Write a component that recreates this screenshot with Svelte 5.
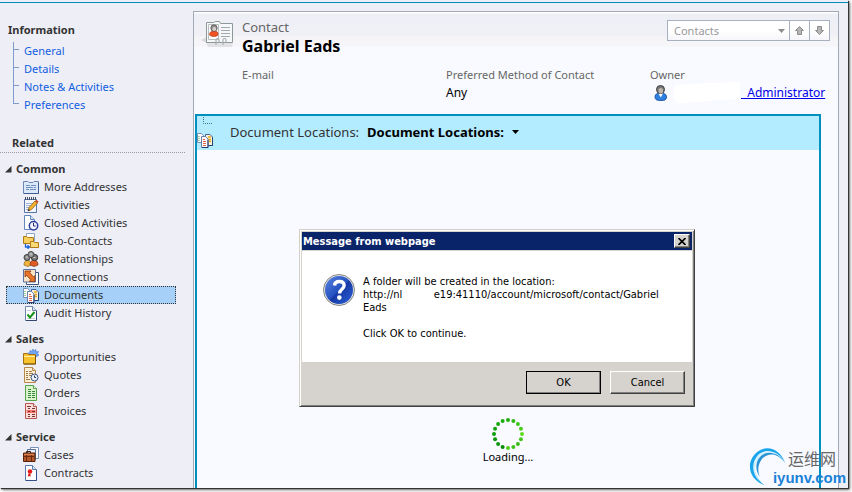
<script lang="ts">
  const sections = ['General', 'Details', 'Notes & Activities', 'Preferences'];

  const groups = [
    {
      title: 'Common',
      items: [
        { label: 'More Addresses', icon: 'address' },
        { label: 'Activities', icon: 'activity' },
        { label: 'Closed Activities', icon: 'closed' },
        { label: 'Sub-Contacts', icon: 'sub' },
        { label: 'Relationships', icon: 'people' },
        { label: 'Connections', icon: 'connect' },
        { label: 'Documents', icon: 'documents' },
        { label: 'Audit History', icon: 'audit' }
      ]
    },
    {
      title: 'Sales',
      items: [
        { label: 'Opportunities', icon: 'opportunity' },
        { label: 'Quotes', icon: 'quote' },
        { label: 'Orders', icon: 'order' },
        { label: 'Invoices', icon: 'invoice' }
      ]
    },
    {
      title: 'Service',
      items: [
        { label: 'Cases', icon: 'case' },
        { label: 'Contracts', icon: 'contract' }
      ]
    }
  ];

  const dotColors = [
    '#1fae0f', '#2fb814', '#3cc41a', '#49cc1c', '#62d820', '#45c41b', '#38bc16', '#3fc21a',
    '#52d01c', '#068a06', '#0b960a', '#0d980a', '#109c0a', '#14a20c', '#18a60c', '#1caa0e'
  ];
  const dots = dotColors.map((color, i) => {
    const angle = (i / 16) * Math.PI * 2;
    return { color, x: 16 + 14 * Math.sin(angle), y: 16 - 14 * Math.cos(angle) };
  });

  // the host name is partly blanked out, nbsp keeps it on one line
  const folderUrl = 'http://nl' + '\u00a0'.repeat(10) + 'e19:41110/account/microsoft/contact/Gabriel Eads';

  let selected = $state('Documents');
  let dialogOpen = $state(true);

  function closeDialog() {
    dialogOpen = false;
  }
</script>

{#snippet icon(name: string)}
  <svg class="icon" width="16" height="16" viewBox="0 0 16 16" aria-hidden="true">
    {#if name === 'address'}
      <path d="M.5 2.500h4.500l1 1h4l1-1h4.500v12H.5z" fill="#dbe8f8" stroke="#6a87b4" />
      <path d="M1 14.500h14.500v-11" fill="none" stroke="#3f5f94" />
      <path d="M3 6.500h4M8 6.500h5M3 8.500h7M11 8.500h2M3 10.500h3M7 10.500h6" stroke="#6d8dc0" />
    {:else if name === 'activity'}
      <path d="M1.500 2.500h12v13h-12z" fill="#f3f7fd" stroke="#5576a8" />
      <path d="M2 1.500h12" stroke="#444f66" stroke-width="3" stroke-dasharray="1 1" />
      <path d="M3 6.500h7M3 8.500h6M3 10.500h4M3 12.500h3" stroke="#9cb4d8" />
      <path d="M6 10.500 12 4l2.500 2-6 6.500-3.500 1.500z" fill="#f4b429" stroke="#8d5a1d" stroke-width=".8" />
      <path d="m12 4 2.500 2 1-1.500-2-1.500z" fill="#d33b1c" />
      <path d="m5 14 .7-2 1.300 1.200z" fill="#222" />
    {:else if name === 'closed'}
      <path d="M1.500.5h6l4 4v10h-10z" fill="#fff" stroke="#5f86bd" />
      <path d="M7.500.5v4h4" fill="#d7e4f6" stroke="#5f86bd" />
      <circle cx="10.500" cy="10.800" r="4.200" fill="#f4f6ff" stroke="#2b3fa0" stroke-width="1.500" />
      <path d="M10.500 8v3h2.200" fill="none" stroke="#26306b" />
    {:else if name === 'sub'}
      <path d="M3.500.5h8v8h-8z" fill="#fff" stroke="#8ea4c8" />
      <path d="M.5 3.500h3l1 1h6v6H.5z" fill="#f9cf5e" stroke="#b07a18" />
      <path d="M7.500 8.500h3l1 1h4v5h-8z" fill="#fbd974" stroke="#b07a18" />
      <path d="M2.500 11v3H6M4.500 12.200 6.500 14l-2 1.800" fill="none" stroke="#1763e0" stroke-width="1.300" />
    {:else if name === 'people'}
      <path d="M1 14c0-3 1-4.500 3.500-4.500S8 11 8 14l-3 1.500z" fill="#f2b63a" stroke="#8c611d" stroke-width=".7" />
      <path d="M7 14c0-3 1.500-5 4-5s4 2 4 5l-4 1.500z" fill="#df5a24" stroke="#7f2b13" stroke-width=".7" />
      <circle cx="4" cy="6.500" r="3" fill="#8b8b8b" stroke="#3c3c3c" />
      <circle cx="11.500" cy="6.500" r="3.200" fill="#777" stroke="#333" />
      <circle cx="8" cy="3.500" r="3" fill="#9a9a9a" stroke="#444" />
      <path d="M3 6h2M10.500 6.500h2M7 3h2" stroke="#d7d7d7" />
    {:else if name === 'connect'}
      <path d="M3.500 3.500h12v12h-12z" fill="#fff" stroke="#3e567f" />
      <path d="M.5.5h12v12.500H.5z" fill="#fbe3c3" stroke="#5873a1" />
      <path d="M2 2h6L6.700 3.700l4 4.500L12 6.500v6H6.200l1.500-1.700-4-4.500L2 8z" fill="#ea7427" stroke="#8a3710" stroke-width=".8" />
    {:else if name === 'documents'}
      <path d="M.5 1.500h4l2 2v7h-6z" fill="#fff" stroke="#7a8fb8" />
      <path d="M1.500 4.500h2M1.500 6.500h2M1.500 8.500h2" stroke="#3fa33f" stroke-dasharray="1 1" />
      <path d="M8.500 2.500h4.500l2.500 2.500v8.500h-7z" fill="#fff3d6" stroke="#40609c" />
      <path d="M11 5h3M11 7.500h3M12 9.500h2" stroke="#e6a81f" stroke-width="1.400" />
      <path d="M15.500 6v7.500H12" fill="none" stroke="#24407c" />
      <path d="M4.500 4.500h4l2.500 2.500v8.500h-6.500z" fill="#fff" stroke="#6b7ea8" />
      <path d="M5 15.500h6V8" fill="none" stroke="#24356b" />
      <path d="M6 7.500h2M6 9.500h3M6 11.500h3M6 13.500h3" stroke="#e0604a" />
    {:else if name === 'audit'}
      <path d="M2.500 1.500h7l4 4v10h-11z" fill="#fff" stroke="#6d83a8" />
      <path d="M3 15.500h10.500V5.500" fill="none" stroke="#33476f" />
      <path d="M9.500 1.500v4h4" fill="#d9e3f3" stroke="#6d83a8" />
      <path d="M4 5.500h4M4 13.500h8" stroke="#c3cddf" />
      <path d="m4.500 9.500 2.500 3 4.500-5.500" fill="none" stroke="#169019" stroke-width="2" />
    {:else if name === 'opportunity'}
      <path d="m10 0 1 2 2-1.500V3l2.500-.5L14.500 5l1.500 1-2 1.500H5L4.500 4l2 .3L7 1.500l2 1z" fill="#74a5ef" stroke="#4379cf" stroke-width=".6" />
      <path d="M.5 4.500h4l1 1h7v9.500H.5z" fill="#f7c22d" stroke="#a4700d" />
      <path d="M1 7.500h11" stroke="#fff0a6" />
      <path d="M12.500 6v9H1" fill="none" stroke="#7d5204" />
    {:else if name === 'quote'}
      <path d="M1.500.5h8l3 3v12h-11z" fill="#fdeed6" stroke="#b98849" />
      <path d="M9.500.5v3h3" fill="#f6d8a9" stroke="#b98849" />
      <path d="M3 4.500h2M6 4.500h3M3 6.500h2M6 6.500h4M3 8.500h2M6 8.500h2M3 10.500h2M3 12.500h4" stroke="#a07b4a" />
      <circle cx="11.500" cy="10.500" r="3.500" fill="#e8f0fb" stroke="#3c5480" />
      <path d="M11.500 8.500v2H13" fill="none" stroke="#263a63" />
    {:else if name === 'order'}
      <path d="M2.500.5h8l3 3v12h-11z" fill="#d9f3cd" stroke="#57a14a" />
      <path d="M10.500.5v3h3" fill="#f2fbef" stroke="#57a14a" />
      <path d="M5 4.500h3M5 6.500h3M9 6.500h3M5 8.500h3M9 8.500h3M5 10.500h3M9 10.500h3M5 12.500h3M9 12.500h3" stroke="#39873a" />
    {:else if name === 'invoice'}
      <path d="M2.500.5h8l3 3v12h-11z" fill="#fbdcd9" stroke="#b85650" />
      <path d="M10.500.5v3h3" fill="#fff3f2" stroke="#b85650" />
      <path d="M4 3.500h4M5 5.500h2M9 5.500h3M5 11.500h2M9 11.500h3M5 13.500h2M9 13.500h3" stroke="#7c3531" />
      <path d="M3.500 7h9v3h-9z" fill="#f0746a" />
      <path d="M5 8.500h2M9 8.500h3" stroke="#8f2823" />
    {:else if name === 'case'}
      <path d="M7.500.5h8v11h-8z" fill="#fff" stroke="#7b93bb" />
      <path d="M4.500 2.500h8v10h-8z" fill="#e9f0fb" stroke="#54719f" />
      <path d="M3.500 6V4.500h4V6" fill="none" stroke="#3b1c0d" />
      <path d="M.5 6h11.500v8.500H.5z" fill="#b4592b" stroke="#572208" />
      <path d="M1 9.500h10.500M3.500 7v7M8.500 7v7" stroke="#6b2c10" />
      <path d="M1 7.500h10" stroke="#d98757" />
    {:else if name === 'contract'}
      <path d="M2.500.5h7l4 4v11h-11z" fill="#fff" stroke="#5878ad" />
      <path d="M9.500.5v4h4" fill="#d9e5f6" stroke="#5878ad" />
      <path d="M3 15.500h10.500v-10" fill="none" stroke="#33508a" />
      <path d="m5.500 8.500-.8 3 1.800-.6 1.200.8-.3-3z" fill="#d31818" />
      <circle cx="7" cy="6.500" r="2.300" fill="#e81d1d" />
    {/if}
  </svg>
{/snippet}

<div class="desktop">
  <div class="window">
    <nav class="sidebar">
      <h2>Information</h2>
      <ul class="tree">
        {#each sections as section}
          <li><a href="#top">{section}</a></li>
        {/each}
      </ul>

      <h2 class="related">Related</h2>
      {#each groups as group}
        <section class="group">
          <h3>
            <svg width="7" height="7" viewBox="0 0 7 7" aria-hidden="true"><path d="M6.500 0v6.500H0z" fill="#333" /></svg>
            {group.title}
          </h3>
          {#each group.items as item}
            <button
              type="button"
              class="nav-item"
              class:selected={selected === item.label}
              onclick={() => (selected = item.label)}
            >
              {@render icon(item.icon)}
              <span>{item.label}</span>
            </button>
          {/each}
        </section>
      {/each}
    </nav>

    <main class="record">
      <header class="record-head">
        <svg class="card" width="32" height="30" viewBox="0 0 32 30" aria-hidden="true">
          <path d="m0 20 6-3v6z" fill="#d8d8de" />
          <path d="M5 23h27l-1 4H7z" fill="#e2e2e6" />
          <path d="M5.500 2.500h7l2-1h4l1 2h12v19h-26z" fill="#f6f7f8" stroke="#8f9898" />
          <path d="M7.500 4.500h10v15h-10z" fill="#fff" stroke="#b7bdbd" />
          <path d="M20 7.500h9M20 10.500h9M20 13.500h9M20 16.500h9" stroke="#a3a8b0" />
          <path d="M8.500 15c0-3 1.500-4 4.500-4s4 1 4 4c-2 2-6 2-8.500 0z" fill="#ef5223" stroke="#b0340f" stroke-width=".6" />
          <circle cx="13" cy="8" r="3.200" fill="#8d8d8d" stroke="#555" stroke-width=".8" />
          <circle cx="13.300" cy="9" r="1.900" fill="#d8d0ca" />
          <path d="M15 25v-5c0-2 3-2 3 0v3M22 25v-5c0-2 3-2 3 0v3" fill="none" stroke="#a9afb3" stroke-width="1.200" />
        </svg>

        <div class="title">
          <p>Contact</p>
          <h1>Gabriel Eads</h1>
        </div>

        <div class="switcher">
          <label class="lookup">
            <select aria-label="Record set">
              <option>Contacts</option>
            </select>
            <svg width="7" height="4" viewBox="0 0 7 4" aria-hidden="true"><path d="M0 0h7L3.500 4z" fill="#8c8c8c" /></svg>
          </label>
          <button type="button" aria-label="Previous record">
            <svg width="9" height="9" viewBox="0 0 9 9"><path d="m4.500.5 4 4h-2v4h-4v-4h-2z" fill="#b5b5b5" stroke="#8c8c8c" /></svg>
          </button>
          <button type="button" aria-label="Next record">
            <svg width="9" height="9" viewBox="0 0 9 9"><path d="m4.500 8.500 4-4h-2v-4h-4v4h-2z" fill="#b5b5b5" stroke="#8c8c8c" /></svg>
          </button>
        </div>

        <dl class="fields">
          <div>
            <dt>E-mail</dt>
            <dd></dd>
          </div>
          <div>
            <dt>Preferred Method of Contact</dt>
            <dd>Any</dd>
          </div>
          <div>
            <dt>Owner</dt>
            <dd class="owner">
              <svg width="16" height="17" viewBox="0 0 16 17" aria-hidden="true">
                <path d="M2 12c0-3 2-4 5.500-4S13.500 9 13.500 12c0 3-2 3.500-5.500 3.500S2 15 2 12z" fill="#2f7fe0" stroke="#174a94" stroke-width=".8" />
                <path d="m5.500 8.500 2.200 4 2.300-4z" fill="#fff" />
                <circle cx="7.500" cy="4.500" r="4" fill="#777" stroke="#3f3f3f" />
                <ellipse cx="7.800" cy="5.700" rx="2.300" ry="2.800" fill="#bdb5ae" />
              </svg>
              <svg class="blank" width="68" height="22" viewBox="0 0 68 22" aria-hidden="true">
                <path d="M2 3c12-1 22-1 34-2l31-1v17l-20 1c-14 1-26 3-42 3L0 16z" fill="#fff" />
              </svg>
              <a href="#owner">&nbsp;&nbsp;Administrator</a>
            </dd>
          </div>
        </dl>
      </header>

      <section class="frame">
        <div class="bar">
          <div class="bar-icon">
            <svg width="10" height="8" viewBox="0 0 10 8" aria-hidden="true"><path d="M.5 1v6.500H10" fill="none" stroke="#4b7080" stroke-dasharray="1 1" /></svg>
            {@render icon('documents')}
          </div>
          <span>Document Locations:</span>
          <button type="button">
            Document Locations:
            <svg width="7" height="4" viewBox="0 0 7 4" aria-hidden="true"><path d="M0 0h7L3.500 4z" fill="#000" /></svg>
          </button>
        </div>

        <div class="loading">
          <svg width="32" height="32" viewBox="0 0 32 32" aria-hidden="true">
            {#each dots as dot}
              <circle cx={dot.x} cy={dot.y} r="2" fill={dot.color} />
            {/each}
          </svg>
          <p>Loading...</p>
        </div>
      </section>
    </main>
  </div>

  {#if dialogOpen}
    <div class="dialog" role="alertdialog" aria-labelledby="dialog-title" aria-describedby="dialog-text">
      <div class="dialog-title">
        <span id="dialog-title">Message from webpage</span>
        <button type="button" aria-label="Close" onclick={closeDialog}>
          <svg width="8" height="7" viewBox="0 0 8 7"><path d="m.5 0 7 7M7.500 0l-7 7" stroke="#000" stroke-width="1.600" /></svg>
        </button>
      </div>
      <div class="dialog-body">
        <svg width="34" height="34" viewBox="0 0 34 34" aria-hidden="true">
          <defs>
            <linearGradient id="ball" x1="0" y1="0" x2="1" y2="1">
              <stop offset="0" stop-color="#5b86e0" />
              <stop offset=".5" stop-color="#2450c0" />
              <stop offset=".52" stop-color="#1638a4" />
              <stop offset="1" stop-color="#2c62d8" />
            </linearGradient>
          </defs>
          <circle cx="17" cy="17" r="15.500" fill="#e4e4e4" stroke="#858585" />
          <circle cx="17" cy="17" r="14" fill="url(#ball)" />
          <path d="M12.500 12.500c.3-3 2.200-4 4.800-4 3 0 4.800 1.600 4.800 4 0 3.800-4.600 3.700-4.600 8" fill="none" stroke="#fff" stroke-width="3.400" />
          <circle cx="17.300" cy="24.600" r="2.300" fill="#fff" />
        </svg>
        <div id="dialog-text">
          <p>A folder will be created in the location:</p>
          <p>{folderUrl}</p>
          <p class="question">Click OK to continue.</p>
        </div>
      </div>
      <div class="dialog-actions">
        <button type="button" class="default" onclick={closeDialog}>OK</button>
        <button type="button" onclick={closeDialog}>Cancel</button>
      </div>
    </div>
  {/if}

  <div class="watermark">
    <svg width="40" height="40" viewBox="0 0 42 42" aria-hidden="true">
      <path d="M38 18C33 4 20-2 9 6-4 16-1 35 16 41 7 34 2 22 9 12c7-9 21-9 29 6z" fill="#18a5ec" />
      <path d="M36 17C28 6 18 5 11 12c-7 8-5 19 1 26C3 30 2 18 9 10c8-8 20-6 27 7z" fill="#d4f1fc" />
      <path d="M38 18C30 7 21 7 14 13c-5 6-5 13-3 19-5-8-4-16 1-21 7-7 19-5 26 7z" fill="#2a93d6" />
    </svg>
    <div>
      <span class="zh" lang="zh">运维网</span>
      <span class="domain">iyunv.com</span>
    </div>
  </div>
</div>

<style>
  :global(body) {
    margin: 0;
    background: #fff;
    font-family: 'Noto Sans', 'Open Sans', sans-serif;
    font-size: 11px;
    line-height: 18px;
    color: #333;
  }

  h1, h2, h3, p, ul, dl, dd {
    margin: 0;
    padding: 0;
  }

  button, select {
    font: inherit;
    color: inherit;
    margin: 0;
    padding: 0;
    border: 0;
    background: none;
    cursor: pointer;
  }

  svg {
    display: block;
    flex: none;
  }

  .desktop {
    position: relative;
    box-sizing: border-box;
    min-height: 100vh;
    padding: 0 4px 4px 0;
    display: flex;
    overflow: hidden;
  }

  .window {
    flex: 1;
    display: flex;
    background: linear-gradient(#eeeef7 2px, #0090c0 2px, #0090c0 3px, #eeeef7 3px);
    box-shadow: 1px 1px 1px #333, 2px 2px 3px #777;
  }

  /* sidebar */

  .sidebar {
    box-sizing: border-box;
    width: 193px;
    padding: 21px 8px 0 0;
  }

  h2 {
    padding-left: 8px;
    font-size: 11px;
    color: #333;
  }

  .tree {
    margin: 3px 0 20px 13px;
    list-style: none;
  }

  .tree li {
    display: flex;
    background: linear-gradient(#7f9cc9, #7f9cc9) 0 0 / 1px 100% no-repeat,
      linear-gradient(#7f9cc9, #7f9cc9) 0 7px / 6px 1px no-repeat;
  }

  .tree li:last-child {
    background-size: 1px 8px, 6px 1px;
  }

  .tree a {
    margin-left: 11px;
    color: #1160e0;
    text-decoration: none;
  }

  .related {
    padding-left: 12px;
    margin-bottom: 7px;
    border-bottom: 1px dotted #999;
  }

  .group {
    display: flex;
    flex-direction: column;
  }

  .group + .group {
    margin-top: 8px;
  }

  h3 {
    display: flex;
    align-items: center;
    gap: 4px;
    padding-left: 5px;
    font-size: 11px;
  }

  .nav-item {
    display: flex;
    align-items: center;
    gap: 5px;
    height: 18px;
    margin: 0 9px 0 6px;
    padding-left: 16px;
    border: 1px solid transparent;
    text-align: left;
  }

  .nav-item.selected {
    border: 1px dotted #333;
    background: #a6d0f8;
  }

  /* record */

  .record {
    flex: 1;
    display: flex;
    flex-direction: column;
    margin: 11px 9px 0 0;
    padding: 0 17px 0 1px;
    border: 1px solid #a3a9b5;
    border-bottom: 0;
    background: linear-gradient(#fff 1px, #eeeef6 2px, #f0f0f6 24px, #f6f4f6 25px, #f6f5f8 34px, #f8faff 35px) #f8faff;
  }

  .record-head {
    display: grid;
    grid-template-columns: 47px 1fr auto;
    margin-right: -9px;
    padding-top: 6px;
    color: #666;
  }

  .card {
    margin: 2px 0 0 6px;
  }

  .title p {
    font-size: 13px;
  }

  .title h1 {
    font-size: 16px;
    line-height: 20px;
    color: #000;
  }

  .switcher {
    display: flex;
    height: 19px;
    margin-top: 2px;
    border: 1px solid #a6b0c0;
    background: linear-gradient(#fff 50%, #f6f6fb);
    color: #999;
  }

  .switcher button {
    display: grid;
    place-items: center;
    width: 20px;
    border-left: 1px solid #a6b0c0;
  }

  .lookup {
    display: grid;
    align-items: center;
    width: 121px;
  }

  .lookup select {
    grid-area: 1 / 1;
    appearance: none;
    height: 19px;
    padding-left: 6px;
  }

  .lookup svg {
    grid-area: 1 / 1;
    justify-self: end;
    margin-right: 4px;
    pointer-events: none;
  }

  .fields {
    grid-column: 2 / 4;
    display: grid;
    grid-template-columns: 1fr 1fr 180px;
    padding: 10px 0 12px;
  }

  dd {
    height: 18px;
    font-size: 12px;
    color: #000;
  }

  .owner {
    display: flex;
    align-items: center;
    margin-left: 3px;
  }

  .owner a {
    color: #0000e8;
  }

  .blank {
    margin-left: 4px;
  }

  .frame {
    flex: 1;
    border: 2px solid #0090c0;
    border-bottom: 0;
  }

  .bar {
    box-sizing: border-box;
    display: flex;
    align-items: center;
    height: 34px;
    padding-bottom: 2px;
    background: #b3ebff;
    font-size: 13px;
  }

  .bar button {
    display: flex;
    align-items: center;
    gap: 8px;
    margin-left: 8px;
    font-weight: bold;
    color: #000;
  }

  .bar-icon {
    display: flex;
    flex-direction: column;
    align-items: flex-end;
    gap: 8px;
    width: 16px;
    margin-right: 17px;
  }

  .loading {
    display: flex;
    flex-direction: column;
    align-items: center;
    padding-top: 268px;
    line-height: 14px;
    color: #000;
  }

  /* message box */

  .dialog {
    position: absolute;
    left: 299px;
    top: 229px;
    box-sizing: border-box;
    width: 396px;
    padding: 2px;
    border: 1px solid #404040;
    border-top-color: #d4d0c8;
    border-left-color: #d4d0c8;
    background: #d6d3ce;
    box-shadow: inset 1px 1px #fff, inset -1px -1px #808080;
    font-family: 'DejaVu Sans Condensed', 'DejaVu Sans', sans-serif;
    line-height: 13px;
    color: #000;
  }

  .dialog-title {
    display: flex;
    align-items: center;
    justify-content: space-between;
    height: 18px;
    padding: 0 2px 0 1px;
    border-bottom: 1px solid #d6d3ce;
    background: #0a246a;
    font-weight: bold;
    color: #fff;
  }

  .dialog button {
    border: 1px solid #404040;
    border-top-color: #fff;
    border-left-color: #fff;
    background: #d6d3ce;
    box-shadow: inset -1px -1px #808080;
  }

  .dialog-title button {
    display: grid;
    place-items: center;
    width: 16px;
    height: 14px;
  }

  .dialog-body {
    display: flex;
    align-items: flex-start;
    gap: 7px;
    padding: 22px 24px 22px 20px;
    background: #fff;
  }

  #dialog-text {
    padding-top: 2px;
  }

  .question {
    padding-top: 13px;
  }

  .dialog-actions {
    display: flex;
    justify-content: flex-end;
    gap: 9px;
    padding: 9px 7px 10px;
  }

  .dialog-actions button {
    width: 75px;
    height: 23px;
  }

  .dialog-actions .default {
    outline: 1px solid #000;
    outline-offset: -1px;
  }

  /* site mark in the corner */

  .watermark {
    position: absolute;
    right: 6px;
    bottom: 6px;
    display: flex;
    pointer-events: none;
  }

  .watermark div {
    display: flex;
    flex-direction: column;
    align-items: flex-end;
    margin-left: -16px;
  }

  .zh {
    padding-right: 10px;
    font-family: 'Noto Sans CJK SC', sans-serif;
    font-size: 16px;
    line-height: 24px;
    color: #666;
  }

  .domain {
    font-family: 'Liberation Sans', sans-serif;
    font-size: 15px;
    line-height: 16px;
    font-weight: bold;
    color: #1b82d8;
  }
</style>
